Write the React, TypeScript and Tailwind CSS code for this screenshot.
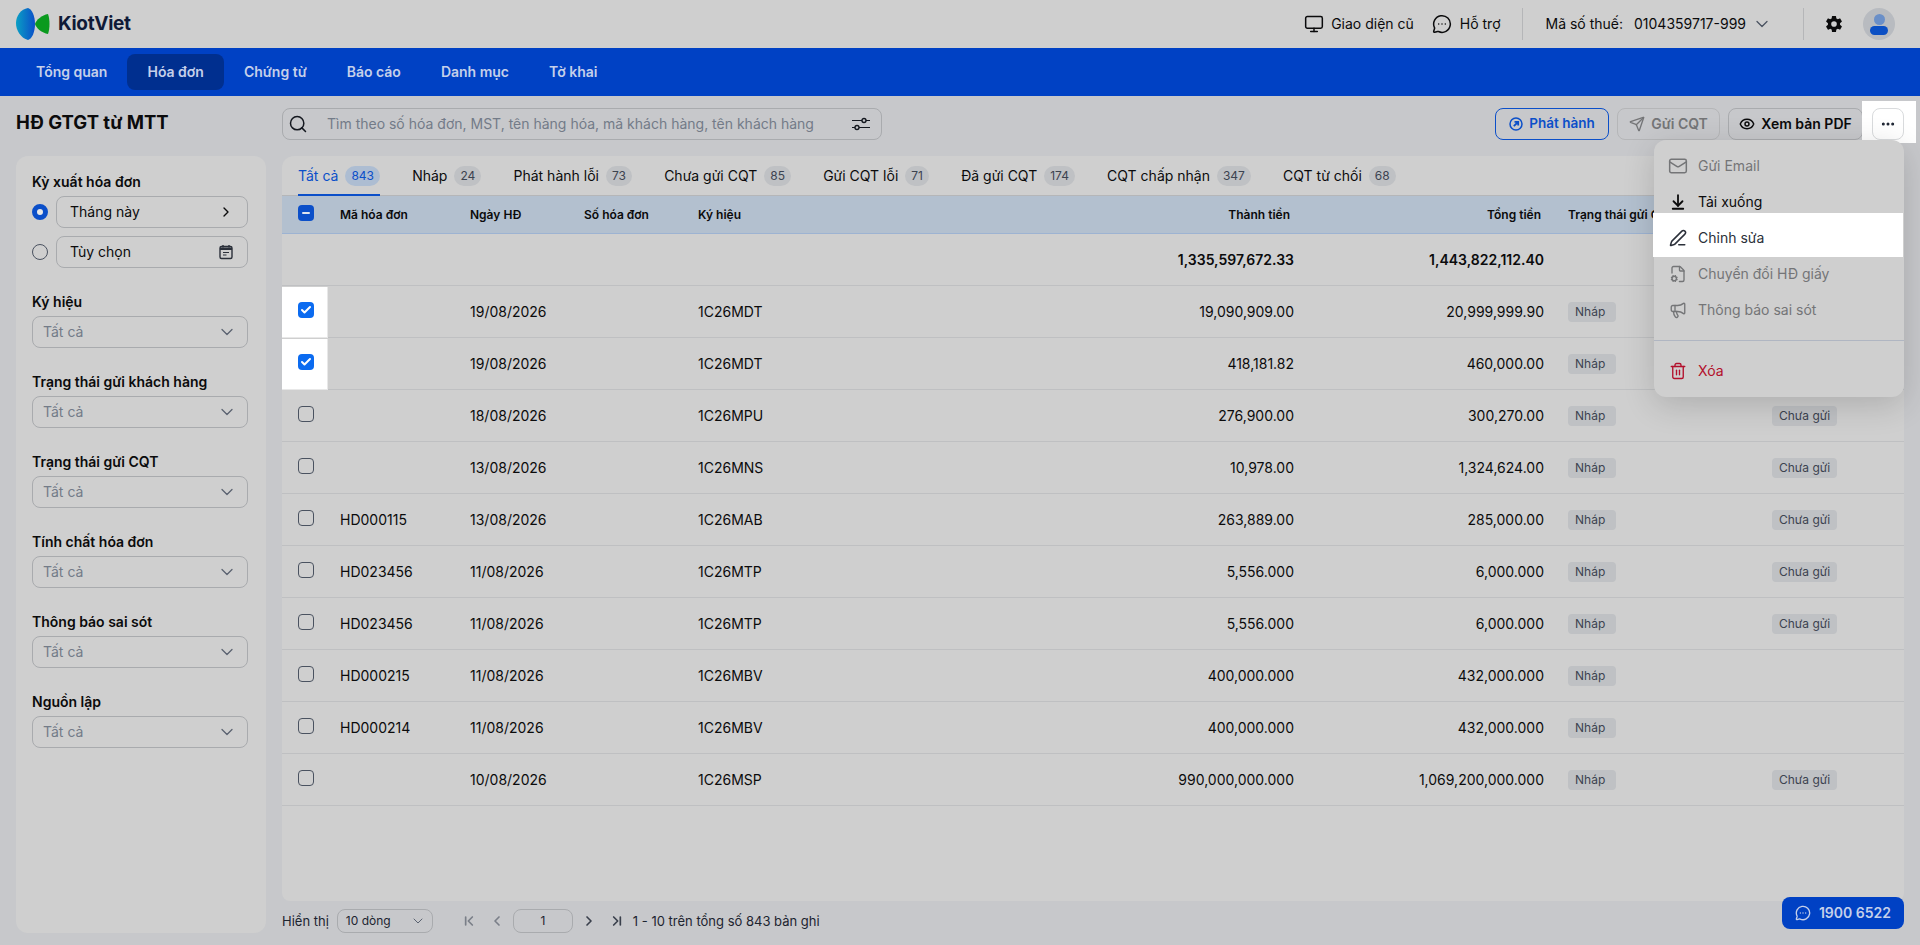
/**
 * Hóa đơn GTGT từ MTT - invoice list with the tour overlay step on "Chỉnh sửa".
 * The page is dimmed by the tour, so colours below are the dimmed values.
 */

import type { ReactNode } from 'react';
import {
  ArrowDownToLine,
  ChevronDown,
  ChevronFirst,
  ChevronLast,
  ChevronLeft,
  ChevronRight,
  Check,
  Ellipsis,
  Eye,
  FileCog,
  Mail,
  Megaphone,
  MessageCircleMore,
  Monitor,
  PenLine,
  Search,
  Send,
  Trash2,
} from 'lucide-react';
import { IoSettingsSharp } from 'react-icons/io5';

const GRID = 'grid grid-cols-[46px_130px_114px_114px_1fr_251px_251px_204px_144px] items-center';

const NAV_ITEMS = ['Tổng quan', 'Hóa đơn', 'Chứng từ', 'Báo cáo', 'Danh mục', 'Tờ khai'];

const TABS = [
  { label: 'Tất cả', count: 843 },
  { label: 'Nháp', count: 24 },
  { label: 'Phát hành lỗi', count: 73 },
  { label: 'Chưa gửi CQT', count: 85 },
  { label: 'Gửi CQT lỗi', count: 71 },
  { label: 'Đã gửi CQT', count: 174 },
  { label: 'CQT chấp nhận', count: 347 },
  { label: 'CQT từ chối', count: 68 },
];

const FILTERS = ['Ký hiệu', 'Trạng thái gửi khách hàng', 'Trạng thái gửi CQT', 'Tính chất hóa đơn', 'Thông báo sai sót', 'Nguồn lập'];

const ROWS = [
  { code: '', date: '19/08/2026', symbol: '1C26MDT', amount: '19,090,909.00', total: '20,999,999.90', sent: true, checked: true },
  { code: '', date: '19/08/2026', symbol: '1C26MDT', amount: '418,181.82', total: '460,000.00', sent: true, checked: true },
  { code: '', date: '18/08/2026', symbol: '1C26MPU', amount: '276,900.00', total: '300,270.00', sent: true },
  { code: '', date: '13/08/2026', symbol: '1C26MNS', amount: '10,978.00', total: '1,324,624.00', sent: true },
  { code: 'HD000115', date: '13/08/2026', symbol: '1C26MAB', amount: '263,889.00', total: '285,000.00', sent: true },
  { code: 'HD023456', date: '11/08/2026', symbol: '1C26MTP', amount: '5,556.000', total: '6,000.000', sent: true },
  { code: 'HD023456', date: '11/08/2026', symbol: '1C26MTP', amount: '5,556.000', total: '6,000.000', sent: true },
  { code: 'HD000215', date: '11/08/2026', symbol: '1C26MBV', amount: '400,000.000', total: '432,000.000', sent: false },
  { code: 'HD000214', date: '11/08/2026', symbol: '1C26MBV', amount: '400,000.000', total: '432,000.000', sent: false },
  { code: '', date: '10/08/2026', symbol: '1C26MSP', amount: '990,000,000.000', total: '1,069,200,000.000', sent: true },
];

function Logo() {
  return (
    <svg width="34" height="32" viewBox="0 0 34 32" className="shrink-0">
      <defs>
        <linearGradient id="kv-blue" x1="0" y1="0" x2="1" y2="0">
          <stop offset="0" stopColor="#0a9fc4" />
          <stop offset="1" stopColor="#0b4fc9" />
        </linearGradient>
      </defs>
      <path d="M12 0C5 1 0 8 0 15c0 8 5 15 12 17 4-1 7-8 7-16S16 1 12 0Z" fill="url(#kv-blue)" />
      <path d="M32 6c-6 1-12 6-13 10 1 4 7 9 13 10 1-3 1.500-6 1.500-10S33 9 32 6Z" fill="#0a9a1e" />
    </svg>
  );
}

function Badge({ children }: { children: ReactNode }) {
  return (
    <span className="inline-flex h-5 min-w-12 items-center rounded bg-[#bfc1c4] px-[7px] text-xs text-[#3c4350]">{children}</span>
  );
}

function RowCheckbox({ checked }: { checked?: boolean }) {
  if (checked) {
    return (
      <span className="-mt-1 flex h-4 w-4 items-center justify-center rounded bg-[#0b6bf0]">
        <Check className="h-3 w-3 text-white" strokeWidth={4} />
      </span>
    );
  }
  return <span className="-mt-1 block h-4 w-4 rounded border border-[#4a5260]" />;
}

function FilterSelect({ label }: { label: string }) {
  return (
    <div className="flex flex-col gap-1">
      <div className="h-5 text-sm font-semibold leading-5 text-[#0b0b0c]">{label}</div>
      <div className="flex h-8 items-center justify-between rounded-lg border border-[#a9abae] pl-[10px] pr-[10px]">
        <span className="text-sm text-[#737b88]">Tất cả</span>
        <ChevronDown className="h-5 w-5 text-[#5a6270]" strokeWidth={1.5} />
      </div>
    </div>
  );
}

function MenuItem({
  icon,
  label,
  muted,
  className,
}: {
  icon: ReactNode;
  label: string;
  muted?: boolean;
  className?: string;
}) {
  return (
    <div className={`flex h-9 items-center gap-3 px-4 text-sm ${muted ? 'text-[#747577]' : 'text-[#0b0b0c]'} ${className ?? ''}`}>
      <span className="flex w-4 justify-center">{icon}</span>
      <span className="relative">{label}</span>
    </div>
  );
}

export default function App() {
  return (
    <div className="relative flex h-screen flex-col overflow-hidden bg-[#c7c8cb] font-['Inter',sans-serif] text-sm text-[#0b0b0c]">
      {/* Top bar */}
      <header className="flex h-12 shrink-0 items-center bg-[#cfcfcf] pl-4 pr-[25px]">
        <Logo />
        <span className="ml-2 text-[19px] font-bold tracking-[-0.3px] text-[#0f1a38]">KiotViet</span>
        <div className="ml-auto flex items-center">
          <Monitor className="h-5 w-5" strokeWidth={1.8} />
          <span className="ml-[7px]">Giao diện cũ</span>
          <MessageCircleMore className="ml-[18px] h-5 w-5" strokeWidth={1.8} />
          <span className="ml-2">Hỗ trợ</span>
          <div className="ml-[21px] h-8 w-px bg-[#b5b6b8]" />
          <span className="ml-[23px]">Mã số thuế:</span>
          <span className="ml-[11px]">0104359717-999</span>
          <ChevronDown className="ml-[6px] h-5 w-5 text-[#4a5260]" strokeWidth={1.5} />
          <div className="ml-[31px] h-8 w-px bg-[#b5b6b8]" />
          <IoSettingsSharp className="ml-[21px] h-[18px] w-[18px]" />
          <div className="ml-5 flex h-8 w-8 flex-col items-center justify-center rounded-full bg-[#b8bbc0]">
            <span className="h-[11px] w-[11px] rounded-full bg-[#6a8fc8]" />
            <span className="mt-[1px] h-[9px] w-[18px] rounded-full bg-[#0b4fc4]" />
          </div>
        </div>
      </header>

      {/* Main nav */}
      <nav className="flex h-12 shrink-0 items-center bg-[#0041c4] pl-4">
        {NAV_ITEMS.map((item) => (
          <div
            key={item}
            className={`flex h-9 items-center rounded-lg px-5 text-sm font-semibold text-[#c5d0ea] ${item === 'Hóa đơn' ? 'bg-[#002f8f]' : ''}`}
          >
            {item}
          </div>
        ))}
      </nav>

      <div className="flex min-h-0 flex-1 gap-4 pl-4 pr-4 pt-3">
        {/* Left column */}
        <aside className="flex w-[250px] shrink-0 flex-col pb-3">
          <h1 className="flex h-7 items-center text-[18.500px] font-bold">HĐ GTGT từ MTT</h1>
          <div className="mt-5 flex flex-1 flex-col gap-6 rounded-xl bg-[#cfcfcf] pl-4 pr-[18px] pt-4">
            <div>
              <div className="mb-1 h-5 text-sm font-semibold leading-5">Kỳ xuất hóa đơn</div>
              <div className="flex flex-col gap-2">
                <div className="flex items-center gap-2">
                  <span className="h-4 w-4 shrink-0 rounded-full border-[5px] border-[#0b4fc9] bg-[#e8e8e8]" />
                  <div className="flex h-8 flex-1 items-center justify-between rounded-lg border border-[#a9abae] pl-[13px] pr-[13px]">
                    <span>Tháng này</span>
                    <ChevronRight className="h-4 w-4" />
                  </div>
                </div>
                <div className="flex items-center gap-2">
                  <span className="h-4 w-4 shrink-0 rounded-full border border-[#4a5260]" />
                  <div className="flex h-8 flex-1 items-center justify-between rounded-lg border border-[#a9abae] pl-[13px] pr-[13px]">
                    <span>Tùy chọn</span>
                    <svg width="16" height="16" viewBox="0 0 16 16" fill="none" className="text-[#2b303a]">
                      <rect x="2" y="2.500" width="12" height="12" rx="1.500" stroke="currentColor" strokeWidth="1.400" />
                      <path d="M2 3.500h12V6H2z" fill="currentColor" />
                      <path d="M5 1v2.500M11 1v2.500" stroke="currentColor" strokeWidth="1.400" />
                      <path d="M5 8.500h6M5 11h3.500" stroke="currentColor" strokeWidth="1.200" />
                    </svg>
                  </div>
                </div>
              </div>
            </div>
            {FILTERS.map((label) => (
              <FilterSelect key={label} label={label} />
            ))}
          </div>
        </aside>

        {/* Right column */}
        <main className="flex min-w-0 flex-1 flex-col">
          <div className="flex h-8 items-center">
            <div className="flex h-8 w-[600px] items-center rounded-lg border border-[#a9abae] pl-[5px] pr-[11px]">
              <Search className="h-5 w-5 text-[#14181f]" strokeWidth={1.8} />
              <span className="ml-[19px] text-sm text-[#737b88]">Tìm theo số hóa đơn, MST, tên hàng hóa, mã khách hàng, tên khách hàng</span>
              <svg width="18" height="14" viewBox="0 0 18 14" fill="none" className="ml-auto text-[#14181f]">
                <path d="M0 3.500h10M14 3.500h4M0 10.500h3M7 10.500h11" stroke="currentColor" strokeWidth="1.200" />
                <circle cx="12" cy="3.500" r="2" stroke="currentColor" strokeWidth="1.400" />
                <circle cx="5" cy="10.500" r="2" stroke="currentColor" strokeWidth="1.400" />
              </svg>
            </div>
            <div className="relative ml-auto flex items-center gap-2">
              <button className="flex h-8 w-[114px] items-center justify-center gap-[6px] rounded-lg border border-[#0b4fc9] text-[13.500px] font-semibold text-[#0b4fc9]">
                <svg width="14" height="14" viewBox="0 0 14 14" fill="none">
                  <circle cx="7" cy="7" r="6" stroke="currentColor" strokeWidth="1.500" />
                  <path d="M4.800 9.200 8.500 5.500M5.500 4.800h3.700v3.700" stroke="currentColor" strokeWidth="1.800" />
                </svg>
                Phát hành
              </button>
              <button className="flex h-8 w-[103px] items-center justify-center gap-[6px] rounded-lg border border-[#b5b6b8] text-sm font-semibold text-[#747577]">
                <Send className="h-4 w-4" />
                Gửi CQT
              </button>
              <button className="flex h-8 w-[135px] items-center justify-center gap-[6px] rounded-lg border border-[#a9abae] text-sm font-semibold">
                <Eye className="h-4 w-4" strokeWidth={2.2} />
                Xem bản PDF
              </button>
              <div className="relative ml-[1px] h-8 w-8">
                <div className="absolute -bottom-[3px] -left-[10px] -right-[12px] -top-[7px] bg-white" />
                <button className="relative flex h-8 w-8 items-center justify-center rounded-lg border border-[#d9dbdd] bg-white">
                  <Ellipsis className="h-4 w-4 text-[#1b2230]" strokeWidth={2.5} />
                </button>
              </div>
            </div>
          </div>

          {/* List card */}
          <section className="mt-4 h-[745px] shrink-0 overflow-hidden rounded-t-xl rounded-b-lg bg-[#cfcfcf]">
            <div className="flex h-10 gap-[32.2px] border-b border-[#b5b6b8] pl-4">
              {TABS.map((tab, i) => (
                <div
                  key={tab.label}
                  className={`relative flex items-center gap-[7px] ${i === 0 ? 'text-[#0b4fc9]' : ''}`}
                >
                  {tab.label}
                  <span
                    className={`flex h-5 items-center rounded-full px-[6px] text-xs ${i === 0 ? 'bg-[#adbdd2] text-[#0b4fc9]' : 'bg-[#bfc1c4] text-[#3c4350]'}`}
                  >
                    {tab.count}
                  </span>
                  {i === 0 && <span className="absolute -bottom-px left-0 right-0 h-0.5 bg-[#0b4fc9]" />}
                </div>
              ))}
            </div>

            <div className={`${GRID} h-[38px] border-b border-[#9db3d2] bg-[#b3c0cf] text-xs font-semibold`}>
              <div className="flex pl-4">
                <span className="-mt-1 flex h-4 w-4 items-center justify-center rounded bg-[#0b4fc9]">
                  <span className="h-0.5 w-2 rounded bg-[#dfe4ee]" />
                </span>
              </div>
              <div className="pl-3">Mã hóa đơn</div>
              <div className="pl-3">Ngày HĐ</div>
              <div className="pl-3">Số hóa đơn</div>
              <div className="pl-3">Ký hiệu</div>
              <div className="pr-[15px] text-right">Thành tiền</div>
              <div className="pr-[15px] text-right">Tổng tiền</div>
              <div className="whitespace-nowrap pl-3">Trạng thái gửi CQT</div>
              <div />
            </div>

            <div className={`${GRID} h-[52px] border-b border-[#bfc0c2] font-semibold`}>
              <div className="col-span-5" />
              <div className="pr-[11px] text-right">1,335,597,672.33</div>
              <div className="pr-3 text-right">1,443,822,112.40</div>
            </div>

            {ROWS.map((row, i) => (
              <div key={i} className={`${GRID} h-[52px] border-b border-[#bfc0c2]`}>
                <div className={`flex h-full items-center pl-4 ${row.checked ? '-mb-px h-[52px] border-b border-r border-[#e8e8e8] bg-white' : ''}`}>
                  <RowCheckbox checked={row.checked} />
                </div>
                <div className="pl-3">{row.code}</div>
                <div className="pl-3">{row.date}</div>
                <div />
                <div className="pl-3">{row.symbol}</div>
                <div className="pr-[11px] text-right">{row.amount}</div>
                <div className="pr-3 text-right">{row.total}</div>
                <div className="pl-3">
                  <Badge>Nháp</Badge>
                </div>
                <div className="pl-3">{row.sent && <Badge>Chưa gửi</Badge>}</div>
              </div>
            ))}
          </section>

          {/* Pager */}
          <div className="flex h-[34px] items-center pt-[6px] text-[13px] text-[#1d2430]">
            <span>Hiển thị</span>
            <div className="ml-2 flex h-6 w-24 items-center justify-between rounded-lg border border-[#a9abae] pl-2 pr-[6px]">
              <span className="text-xs">10 dòng</span>
              <ChevronDown className="h-4 w-4 text-[#5a6270]" strokeWidth={1.5} />
            </div>
            <ChevronFirst className="ml-7 h-4 w-4 text-[#7a7f88]" strokeWidth={2.5} />
            <ChevronLeft className="ml-3 h-4 w-4 text-[#7a7f88]" strokeWidth={2.5} />
            <div className="ml-2 flex h-6 w-[60px] items-center justify-center rounded-lg border border-[#a9abae] text-xs">1</div>
            <ChevronRight className="ml-2 h-4 w-4 text-[#3a404c]" strokeWidth={2.5} />
            <ChevronLast className="ml-3 h-4 w-4 text-[#3a404c]" strokeWidth={2.5} />
            <span className="ml-2">1 - 10 trên tổng số 843 bản ghi</span>
          </div>
        </main>
      </div>

      {/* More actions menu */}
      <div className="absolute right-4 top-[140px] h-[257px] w-[250px] rounded-xl bg-[#cfcfcf] pt-2 shadow-[0_8px_32px_rgba(0,0,0,0.16)]">
        <MenuItem muted label="Gửi Email" icon={<Mail className="h-5 w-5 shrink-0" strokeWidth={1.8} />} />
        <MenuItem label="Tải xuống" icon={<ArrowDownToLine className="h-[18px] w-[18px] shrink-0" strokeWidth={2.4} />} />
        <div className="relative">
          <div className="absolute -bottom-[1px] -left-px -top-[7px] right-px bg-white" />
          <MenuItem label="Chỉnh sửa" className="relative !text-[#2b303a]" icon={<PenLine className="relative h-[18px] w-[18px] shrink-0" strokeWidth={2} />} />
        </div>
        <MenuItem muted label="Chuyển đổi HĐ giấy" icon={<FileCog className="h-[18px] w-[18px] shrink-0" strokeWidth={1.8} />} />
        <MenuItem muted label="Thông báo sai sót" icon={<Megaphone className="h-[18px] w-[18px] shrink-0" strokeWidth={1.8} />} />
        <div className="mt-3 h-px bg-[#b0b6c2]" />
        <MenuItem label="Xóa" className="mt-3 !text-[#b3102c]" icon={<Trash2 className="h-[18px] w-[18px] shrink-0" strokeWidth={1.8} />} />
      </div>

      {/* Hotline */}
      <div className="absolute bottom-4 right-4 flex h-8 w-[122px] items-center justify-center gap-2 rounded-lg bg-[#0041c4] text-sm font-semibold text-[#c5d0ea]">
        <MessageCircleMore className="h-4 w-4" />
        1900 6522
      </div>
    </div>
  );
}
